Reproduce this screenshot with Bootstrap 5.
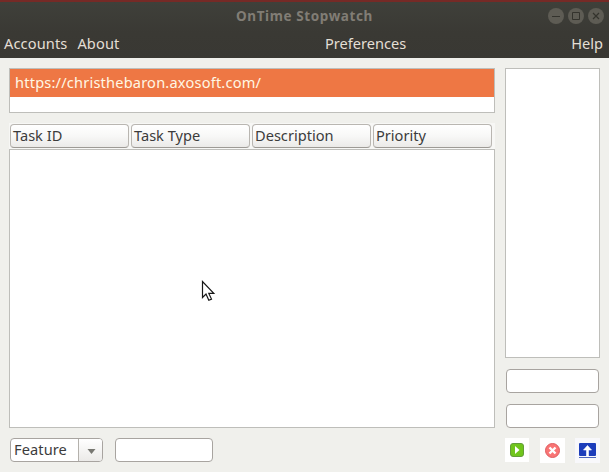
<!DOCTYPE html>
<html lang="en">
<head>
<meta charset="utf-8">
<meta name="viewport" content="width=device-width, initial-scale=1">
<title>OnTime Stopwatch</title>
<link href="https://cdn.jsdelivr.net/npm/bootstrap@5.3.0/dist/css/bootstrap.min.css" rel="stylesheet">
<style>
body{width:609px;height:472px;overflow:hidden;background:#f0f0ec;color:#3c3c3c;font-family:"Noto Sans",sans-serif;font-size:14.6px;line-height:20px}
.chrome{height:58px;background:linear-gradient(#3f403a,#3a3934 55%,#393833);border-top:2px solid #762a26;color:#e4dfd5}
.title-bar{height:28px;color:#817d75;font-weight:700;font-size:13.5px;letter-spacing:.6px}
.controls{right:5px;top:6px;gap:4px}
.menu-bar{height:28px;line-height:26px;padding:0 6px 0 4px}
.menu-bar a{color:inherit;text-decoration:none}
.menu-files{width:321px;letter-spacing:.12px}
.menu-about{margin-left:10px}
.workspace{padding:10px 9px 0;gap:10px}
.main-pane{width:486px}
.side-pane{width:95px}
.pane{background:#fff;border:1px solid #bebeba}
.accounts{height:45px;margin-bottom:10px}
.account{height:28px;line-height:27px;padding-left:5px;background:#ee7744;color:#fff8e4;letter-spacing:.19px}
.heads{height:26px;padding:1px 1px 0;gap:2px;background:#f7f7f5}
.head-btn{width:119px;height:24px;padding:0 0 2px 2px;line-height:20px;font-size:inherit;text-align:left;color:#3c3c3c;border:1px solid #b9b6b1;border-bottom-color:#9d9a95;border-radius:4px;background:linear-gradient(#fff,#f8f8f7 50%,#ebeae8)}
.tasks{height:279px}
.timers{height:290px}
.lower{margin-top:10px}
.entry{height:24px;min-height:0;padding:0 3px;border:1px solid #a8a4a0;border-radius:4px;background:#fff}
.side-pane .entry{width:93px;margin:11px 0 0 1px}
.combo{width:93px;height:24px;margin-left:1px;border:1px solid #a8a4a0;border-radius:4px;background:#fff;overflow:hidden;line-height:20px}
.combo-text{padding-left:3px;letter-spacing:.1px}
.combo-arrow{width:24px;padding:2px 0 0 2px;border-left:1px solid #b4b1ac;background:linear-gradient(#fff,#ebeae8)}
.find{width:98px;margin-left:12px}
.tool{width:25px;height:25px;padding:0;border:0;background:#fff;line-height:0}
.pointer{left:201px;top:279px}
svg{display:block}
</style>
</head>
<body>
<header class="chrome">
  <div class="title-bar position-relative d-flex align-items-center justify-content-center">
    <span>OnTime Stopwatch</span>
    <div class="controls position-absolute d-flex">
      <svg width="16" height="16"><circle cx="8" cy="8" r="8" fill="#5e5c54"/><path d="M4 8.5h8" stroke="#34332d"/></svg>
      <svg width="16" height="16"><circle cx="8" cy="8" r="8" fill="#5e5c54"/><path d="M4.500 4.500h7v7h-7z" fill="none" stroke="#34332d"/></svg>
      <svg width="16" height="16"><circle cx="8" cy="8" r="8" fill="#5e5c54"/><path d="M5 5l6 6M11 5l-6 6" stroke="#34332d" stroke-width="1.2"/></svg>
    </div>
  </div>
  <nav class="menu-bar d-flex">
    <div class="menu-files d-flex"><a href="#">Accounts</a><a href="#" class="menu-about">About</a></div>
    <a href="#">Preferences</a>
    <a href="#" class="ms-auto">Help</a>
  </nav>
</header>
<main class="workspace d-flex">
  <section class="main-pane d-flex flex-column">
    <div class="accounts pane"><div class="account">https://christhebaron.axosoft.com/</div></div>
    <div class="heads d-flex">
      <button class="head-btn">Task ID</button>
      <button class="head-btn">Task Type</button>
      <button class="head-btn">Description</button>
      <button class="head-btn">Priority</button>
    </div>
    <div class="tasks pane"></div>
    <div class="lower d-flex">
      <div class="combo d-flex">
        <span class="combo-text flex-grow-1">Feature</span>
        <span class="combo-arrow d-flex align-items-center justify-content-center"><svg width="9" height="7"><path d="M.5 1h8L4.500 6z" fill="#777771"/></svg></span>
      </div>
      <input class="form-control entry find" aria-label="Filter">
    </div>
  </section>
  <aside class="side-pane d-flex flex-column">
    <div class="timers pane"></div>
    <input class="form-control entry" aria-label="Elapsed">
    <input class="form-control entry" aria-label="Notes">
    <div class="lower d-flex justify-content-between">
      <button class="tool" aria-label="Start"><svg width="25" height="25"><path d="M24 0h1v25H0v-1h24z" fill="#f0f0ec"/><rect x="5.500" y="5.500" width="13" height="13" rx="2.500" fill="#70c51c" stroke="#639d39"/><path d="M10 8v8l4.500-4z" fill="#fff"/></svg></button>
      <button class="tool" aria-label="Stop"><svg width="25" height="25"><circle cx="12.500" cy="12.500" r="7" fill="#f97575" stroke="#df5c60"/><path d="M9.500 9.500l6 6M15.500 9.500l-6 6" stroke="#fff" stroke-width="2.400"/></svg></button>
      <button class="tool" aria-label="Upload"><svg width="25" height="25"><path d="M0 0h25v25H0z" fill="#f8f8fb"/><rect x="4" y="5" width="17" height="13" rx="1" fill="#1c3dba"/><path d="M4 19.500h17" stroke="#4d66bd"/><path d="M12.500 7.500L8.500 12h3v6h2v-6h3z" fill="#fff" stroke="#fff" stroke-width=".6"/></svg></button>
    </div>
  </aside>
</main>
<svg class="pointer position-absolute" width="16" height="23"><path d="M1.500 2.500v16l3.500-3.500 2.800 6.300 2.700-1.200-2.700-5.700h5z" fill="#fff" stroke="#161616" stroke-width="1.200"/></svg>
<script src="https://cdn.jsdelivr.net/npm/bootstrap@5.3.0/dist/js/bootstrap.bundle.min.js"></script>
</body>
</html>
